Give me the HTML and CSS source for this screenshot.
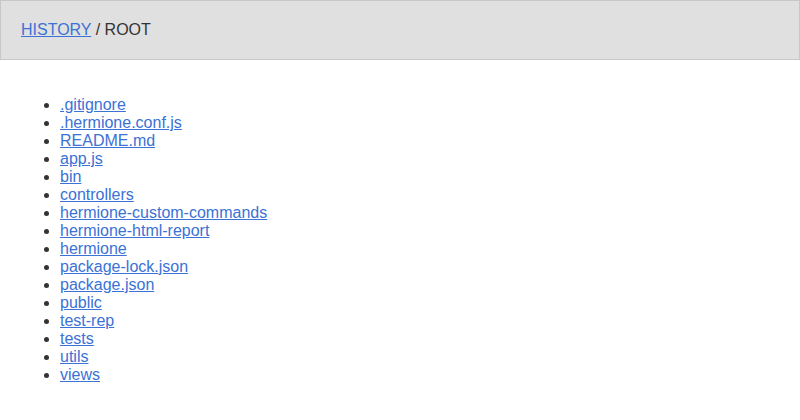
FILE: index.html
```html
<!DOCTYPE html>
<html>
<head>
<meta charset="utf-8">
<link rel="stylesheet" href="styles.css">
</head>
<body>
<header class="header">
  <a class="link" href="#">HISTORY</a> / ROOT
</header>
<main class="content">
  <ul class="files">
    <li><a class="link" href="#">.gitignore</a></li>
    <li><a class="link" href="#">.hermione.conf.js</a></li>
    <li><a class="link" href="#">README.md</a></li>
    <li><a class="link" href="#">app.js</a></li>
    <li><a class="link" href="#">bin</a></li>
    <li><a class="link" href="#">controllers</a></li>
    <li><a class="link" href="#">hermione-custom-commands</a></li>
    <li><a class="link" href="#">hermione-html-report</a></li>
    <li><a class="link" href="#">hermione</a></li>
    <li><a class="link" href="#">package-lock.json</a></li>
    <li><a class="link" href="#">package.json</a></li>
    <li><a class="link" href="#">public</a></li>
    <li><a class="link" href="#">test-rep</a></li>
    <li><a class="link" href="#">tests</a></li>
    <li><a class="link" href="#">utils</a></li>
    <li><a class="link" href="#">views</a></li>
  </ul>
</main>
</body>
</html>
```
FILE: styles.css
```css
html, body {
  margin: 0;
  padding: 0;
  background: #fff;
}
body {
  font-family: "Liberation Sans", Arial, sans-serif;
  font-size: 16px;
  line-height: 18px;
  color: #333;
}
.header {
  background: #e0e0e0;
  border: 1px solid #c8c8c8;
  padding: 20px;
  height: 18px;
}
.link {
  color: #3a72d6;
  text-decoration: underline;
}
.content {
  padding: 20px;
}
.files {
  margin: 16px 0;
  padding-left: 40px;
}
```
